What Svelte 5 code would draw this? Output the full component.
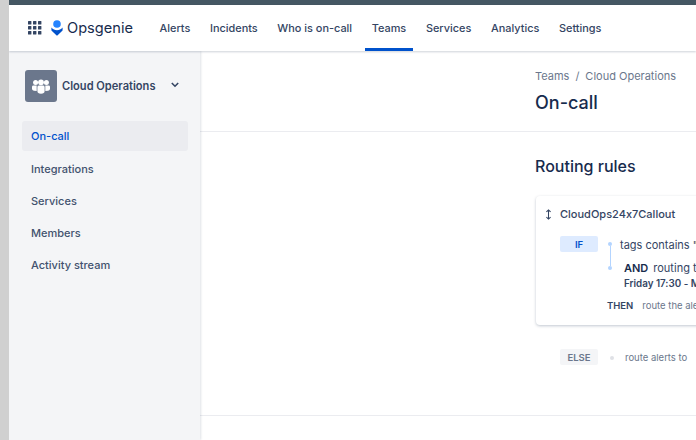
<script>
	const navItems = ['Alerts', 'Incidents', 'Who is on-call', 'Teams', 'Services', 'Analytics', 'Settings'];
	const sideItems = ['On-call', 'Integrations', 'Services', 'Members', 'Activity stream'];
</script>

<div class="frame">
	<div class="topstrip"></div>
	<header class="navbar">
		<svg class="apps" viewBox="0 0 14 14" width="14" height="14" fill="#344563">
			{#each [0, 5, 10] as y}
				{#each [0, 5, 10] as x}
					<rect x={x} y={y} width="3.4" height="3.4" rx="0.5" />
				{/each}
			{/each}
		</svg>
		<svg class="logo" viewBox="0 0 12 16" width="12" height="16">
			<circle cx="6" cy="4" r="3.8" fill="#2684ff" />
			<path d="M0.4 7.6 C2 9.4 3.8 10.2 6 10.2 C8.2 10.2 10 9.4 11.6 7.6 L11.6 10 Q11.6 10.8 10.8 11.3 L6.4 15.4 Q6 15.7 5.6 15.4 L1.2 11.3 Q0.4 10.8 0.4 10 Z" fill="#0052cc" />
		</svg>
		<span class="brand">Opsgenie</span>
		<nav class="topnav">
			{#each navItems as item}
				<span class="topitem" class:current={item === 'Teams'}>{item}</span>
			{/each}
		</nav>
	</header>

	<div class="body">
		<aside class="sidebar">
			<div class="team">
				<div class="avatar">
					<svg viewBox="0 0 20 16" width="18" height="15" fill="#fff">
						<circle cx="4" cy="3.6" r="2.8" />
						<circle cx="16" cy="3.6" r="2.8" />
						<circle cx="10" cy="3.4" r="3.2" />
						<path d="M0 8.4 Q0 7 1.6 7 L5.2 7 L5.2 13 L2 12.6 Q0 12.2 0 10.6 Z" />
						<path d="M20 8.4 Q20 7 18.4 7 L14.8 7 L14.8 13 L18 12.6 Q20 12.2 20 10.6 Z" />
						<path d="M6 8.6 Q6 7 8 7 L12 7 Q14 7 14 8.6 L14 13 Q14 16 10 16 Q6 16 6 13 Z" />
					</svg>
				</div>
				<span class="teamname">Cloud Operations</span>
				<svg class="chev" viewBox="0 0 10 7" width="8" height="6" fill="none" stroke="#344563" stroke-width="2">
					<path d="M1 1 L5 5 L9 1" />
				</svg>
			</div>
			<ul class="sidelist">
				{#each sideItems as item, i}
					<li class:active={i === 0}>{item}</li>
				{/each}
			</ul>
		</aside>

		<main class="content">
			<div class="pagehead">
				<div class="crumbs">Teams<span class="slash">/</span>Cloud Operations</div>
				<h1>On-call</h1>
			</div>
			<section class="rules">
				<h2>Routing rules</h2>
				<div class="card">
					<div class="cardtitle">
						<svg viewBox="0 0 8 12" width="7" height="11" fill="none" stroke="#344563" stroke-width="1.2">
							<path d="M4 1 L4 11 M1.6 3 L4 0.8 L6.4 3 M1.6 9 L4 11.2 L6.4 9" />
						</svg>
						<span>CloudOps24x7Callout</span>
					</div>
					<div class="ifrow">
						<span class="tag if">IF</span>
						<div class="connector"><i></i><b></b><i></i></div>
						<div class="conds">
							<div class="cond">tags contains "</div>
							<div class="cond and"><strong>AND</strong>routing t</div>
							<div class="when">Friday 17:30 - M</div>
						</div>
					</div>
					<div class="thenrow"><strong>THEN</strong><span>route the ale</span></div>
				</div>
				<div class="elserow">
					<span class="tag else">ELSE</span>
					<i class="dot"></i>
					<span>route alerts to</span>
				</div>
			</section>
			<div class="bottomline"></div>
		</main>
	</div>
</div>

<style>
	:global(body) {
		margin: 0;
	}

	.frame {
		width: 696px;
		height: 440px;
		overflow: hidden;
		box-sizing: border-box;
		border-left: 9px solid #d0d0d0;
		background: #fff;
		display: flex;
		flex-direction: column;
		font-family: Inter, 'Liberation Sans', sans-serif;
		font-feature-settings: 'calt' 0;
		color: #344563;
	}

	.topstrip {
		height: 5px;
		background: #455763;
		flex: none;
	}

	.navbar {
		height: 46px;
		flex: none;
		display: flex;
		align-items: center;
		background: #fff;
		box-shadow: 0 1px 2px rgba(9, 30, 66, 0.2);
		position: relative;
		z-index: 2;
	}

	.apps {
		margin-left: 19px;
	}

	.logo {
		margin-left: 9px;
	}

	.brand {
		margin-left: 4px;
		font-size: 14.6px;
		color: #172b4d;
	}

	.topnav {
		display: flex;
		margin-left: 19.6px;
		height: 100%;
	}

	.topitem {
		display: flex;
		align-items: center;
		padding: 0 7px;
		margin-right: 5.7px;
		font-size: 10.9px;
		font-weight: 500;
		box-sizing: border-box;
		border-bottom: 3px solid transparent;
		padding-top: 3px;
	}

	.topitem.current {
		border-bottom-color: #0052cc;
	}

	.body {
		flex: 1;
		display: flex;
		min-height: 0;
	}

	.sidebar {
		width: 191px;
		flex: none;
		background: #f4f5f7;
		box-shadow: 1px 0 2px rgba(9, 30, 66, 0.12);
		padding: 19px 12px 0 13px;
		box-sizing: border-box;
		position: relative;
		z-index: 1;
	}

	.team {
		display: flex;
		align-items: center;
		padding-left: 3px;
	}

	.avatar {
		width: 32px;
		height: 32px;
		border-radius: 3px;
		background: #6b778c;
		display: flex;
		align-items: center;
		justify-content: center;
		flex: none;
	}

	.teamname {
		margin-left: 5px;
		font-size: 11.1px;
		font-weight: 600;
	}

	.chev {
		margin-left: 16px;
		margin-bottom: 3px;
	}

	.sidelist {
		list-style: none;
		margin: 19px 0 0;
		padding: 0;
		font-size: 11px;
		font-weight: 500;
		color: #42526e;
	}

	.sidelist li {
		height: 32px;
		display: flex;
		align-items: center;
		padding-left: 9px;
		border-radius: 3px;
	}

	.sidelist li.active {
		height: 30px;
		margin-bottom: 2px;
		background: #ebecf0;
		color: #0052cc;
	}

	.content {
		flex: 1;
		min-width: 0;
		display: flex;
		flex-direction: column;
		overflow: hidden;
	}

	.pagehead {
		height: 81px;
		flex: none;
		box-sizing: border-box;
		border-bottom: 1px solid #ebecf0;
		padding: 18px 0 0 335px;
	}

	.crumbs {
		font-size: 11px;
		color: #6b778c;
		line-height: 14px;
		white-space: nowrap;
	}

	.slash {
		margin: 0 6px;
	}

	h1 {
		margin: 8px 0 0;
		font-size: 18px;
		line-height: 24px;
		font-weight: 500;
		color: #172b4d;
	}

	.rules {
		flex: 1;
		padding: 24px 0 0 335px;
		box-sizing: border-box;
		width: 700px;
	}

	h2 {
		margin: 0;
		font-size: 16px;
		line-height: 20px;
		font-weight: 500;
		color: #172b4d;
	}

	.card {
		margin: 20px 0 0 1px;
		height: 129px;
		width: 300px;
		box-sizing: border-box;
		border-radius: 4px;
		background: #fff;
		box-shadow: 0 1px 3px rgba(9, 30, 66, 0.25);
		padding: 11px 0 0 9px;
		white-space: nowrap;
	}

	.cardtitle {
		display: flex;
		align-items: center;
		gap: 8px;
		font-size: 11px;
		font-weight: 500;
		line-height: 14px;
	}

	.ifrow {
		display: flex;
		margin: 15px 0 0 15px;
	}

	.tag {
		width: 38px;
		height: 16px;
		border-radius: 2px;
		font-size: 9.5px;
		font-weight: 600;
		display: flex;
		align-items: center;
		justify-content: center;
		flex: none;
	}

	.tag.if {
		background: #deebff;
		color: #0052cc;
	}

	.tag.else {
		background: #f4f5f7;
	}

	.connector {
		width: 4px;
		margin: 6px 0 0 10px;
		display: flex;
		flex-direction: column;
		align-items: center;
	}

	.connector i {
		width: 4px;
		height: 4px;
		border-radius: 50%;
		background: #b3d4ff;
	}

	.connector b {
		width: 1px;
		height: 20px;
		background: #b3d4ff;
	}

	.conds {
		margin: 2px 0 0 8px;
		font-size: 11px;
		line-height: 14px;
	}

	.cond.and {
		margin: 9px 0 0 4px;
	}

	.cond strong {
		margin-right: 5px;
		font-size: 11px;
		font-weight: 600;
		color: #172b4d;
	}

	.when {
		margin: 3px 0 0 4px;
		font-size: 9.8px;
		line-height: 12px;
		font-weight: 600;
	}

	.thenrow {
		margin: 9px 0 0 62px;
		font-size: 9.5px;
		line-height: 14px;
		color: #6b778c;
	}

	.thenrow strong {
		margin-right: 9px;
		font-weight: 600;
		color: #344563;
	}

	.elserow {
		display: flex;
		align-items: center;
		margin: 24px 0 0 25px;
		font-size: 9.5px;
		color: #6b778c;
		white-space: nowrap;
	}

	.dot {
		width: 4px;
		height: 4px;
		margin: 2px 11.5px 0 11.5px;
		border-radius: 50%;
		background: #dfe1e6;
	}

	.bottomline {
		height: 25px;
		flex: none;
		box-sizing: border-box;
		border-top: 1px solid #ebecf0;
	}
</style>
